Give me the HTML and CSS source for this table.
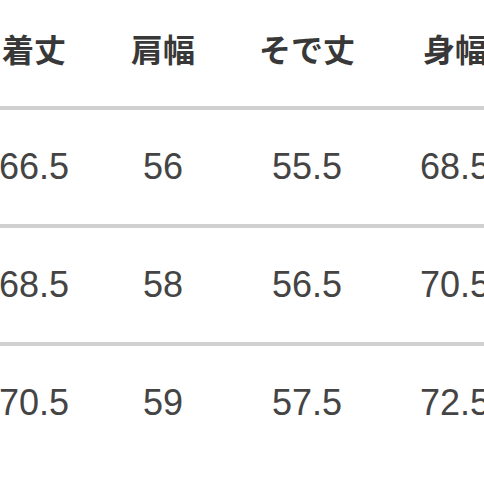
FILE: index.html
```html
<!DOCTYPE html>
<html lang="ja">
<head>
<meta charset="utf-8">
<link rel="stylesheet" href="styles.css">
</head>
<body>
<table class="size-table">
  <colgroup>
    <col class="c1"><col class="c2"><col class="c3"><col class="c4">
  </colgroup>
  <thead>
    <tr><th>着丈</th><th>肩幅</th><th>そで丈</th><th>身幅</th></tr>
  </thead>
  <tbody>
    <tr><td>66.5</td><td>56</td><td>55.5</td><td>68.5</td></tr>
    <tr><td>68.5</td><td>58</td><td>56.5</td><td>70.5</td></tr>
    <tr class="last"><td>70.5</td><td>59</td><td>57.5</td><td>72.5</td></tr>
  </tbody>
</table>
</body>
</html>
```
FILE: styles.css
```css
html, body {
  margin: 0;
  padding: 0;
  background: #ffffff;
  overflow: hidden;
  width: 484px;
  height: 484px;
}
.size-table {
  border-collapse: collapse;
  table-layout: fixed;
  width: 554px;
  margin-left: -30px;
}
.c1 { width: 128px; }
.c2 { width: 130px; }
.c3 { width: 158px; }
.c4 { width: 138px; }
.size-table th {
  font-family: "Noto Sans CJK JP", "Liberation Sans", sans-serif;
  font-weight: 700;
  font-size: 32px;
  line-height: 32px;
  color: #383838;
  height: 96px;
  padding: 0 0 10px 0;
  vertical-align: middle;
  text-align: center;
  border-bottom: 4px solid #d0d0d0;
  white-space: nowrap;
}
.size-table td {
  font-family: "Liberation Sans", Arial, sans-serif;
  font-size: 36px;
  line-height: 36px;
  color: #444444;
  height: 114px;
  padding: 0;
  vertical-align: middle;
  text-align: center;
  border-bottom: 4px solid #d0d0d0;
  white-space: nowrap;
}
.size-table tr.last td {
  border-bottom: none;
}
```
